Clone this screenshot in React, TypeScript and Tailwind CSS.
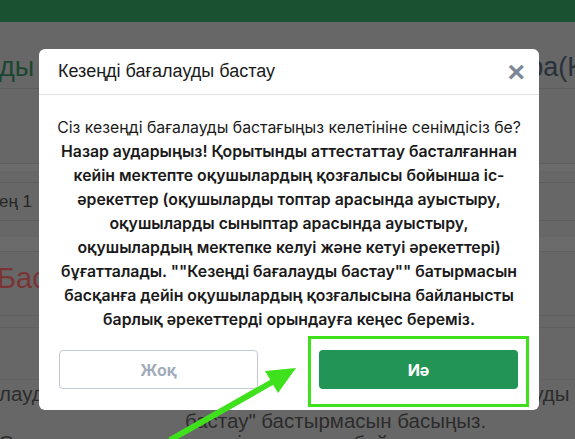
import React from 'react';

const lines: string[] = [
  'Назар аударыңыз! Қорытынды аттестаттау басталғаннан',
  'кейін мектепте оқушылардың қозғалысы бойынша іс-',
  'әрекеттер (оқушыларды топтар арасында ауыстыру,',
  'оқушыларды сыныптар арасында ауыстыру,',
  'оқушылардың мектепке келуі және кетуі әрекеттері)',
  'бұғатталады. ""Кезеңді бағалауды бастау"" батырмасын',
  'басқанға дейін оқушылардың қозғалысына байланысты',
  'барлық әрекеттерді орындауға кеңес береміз.',
];

const App: React.FC = () => {
  return (
    <div className="relative w-[575px] h-[439px] overflow-hidden bg-[#676767] font-['Liberation_Sans',Arial,sans-serif]">
      {/* dimmed page behind the dialog */}
      <div className="h-[22px] bg-[#1a5231]" />
      <div className="flex justify-between pt-[31px] pb-[6px] border-b border-[#5d5d5d] whitespace-nowrap">
        <span className="text-[27px] leading-[29px] text-[#1a4630] -ml-[1px]">ды</span>
        <span className="text-[27px] leading-[29px] text-[#2a303a] -mr-[8px]">ра(Қ</span>
      </div>
      <div className="h-[75px] border-b border-[#5f5f5f]" />
      <div className="h-[7px] bg-[#6b6b6b]" />
      <div className="h-[12px] border-b border-[#5d5d5d]" />
      <div className="h-[38px] flex items-center border-b border-[#5d5d5d]">
        <span className="text-[17px] text-[#262626] -ml-[1px]">ең 1</span>
      </div>
      <div className="h-[16px]" />
      <div className="h-[15px] bg-[#6b6b6b] border-b border-[#5f5f5f]" />
      <div className="h-[52px] flex items-center">
        <span className="text-[29px] leading-[30px] text-[#7a3434] -ml-[3px]">Бас</span>
      </div>
      <div className="h-[12px] border-b border-[#5f5f5f]" />
      <div className="h-[12px] border-b border-[#5f5f5f]" />
      <div className="h-[52px] border-b border-[#626262]" />
      <div className="flex justify-between whitespace-nowrap text-[20.5px] leading-[27px] text-[#2c2c2c]">
        <span className="-ml-[1px]">лауды бастау үшін</span>
        <span className="-mr-[12px]">бағалауды б</span>
      </div>
      <div className="pl-[96px] text-center whitespace-nowrap text-[20.5px] leading-[27px] text-[#2c2c2c]">
        бастау" бастырмасын басыңыз.
      </div>
      <div className="pl-[96px] -mt-[5px] -ml-[200px] -mr-[200px] text-center whitespace-nowrap text-[20.5px] leading-[27px] text-[#2c2c2c]">
        Оқушылардың мектептегі қозғалысы бойынша әрекеттер тоқтатылады
      </div>

      {/* dialog */}
      <div className="absolute left-[39px] top-[49px] w-[500px] rounded-[6px] bg-white font-['Inter',sans-serif]">
        <div className="h-[46px] flex items-center justify-between pl-[19px] pr-[14px] border-b border-[#dee2e6]">
          <h5 className="text-[18px] text-[#1a1a1a] font-['Liberation_Sans',Arial,sans-serif]">
            Кезеңді бағалауды бастау
          </h5>
          <span className="text-[30px] leading-none font-bold text-[#7b8698] font-['Liberation_Sans',Arial,sans-serif]">×</span>
        </div>
        <div className="pt-[21px] px-[8px] text-center text-[15.8px] leading-[24px] text-[#1a1a1a] whitespace-nowrap">
          <p>Сіз кезеңді бағалауды бастағыңыз келетініне сенімдісіз бе?</p>
          {lines.map(l => (
            <p key={l} className="font-semibold">{l}</p>
          ))}
        </div>
        <div className="flex justify-between pt-[18px] pb-[21px] px-[20px]">
          <button className="w-[199px] h-[39px] rounded-[4px] border border-[#c3cad4] bg-white text-[16px] font-bold text-[#a2acba]">
            Жоқ
          </button>
          <button className="w-[199px] h-[39px] rounded-[4px] bg-[#229456] text-[16px] font-bold text-white mr-[1px]">
            Иә
          </button>
        </div>
      </div>

      {/* highlight box */}
      <div className="absolute left-[308px] top-[336px] w-[221px] h-[71px] border-[3px] border-[#3fe01c]" />

      {/* arrow */}
      <svg className="absolute left-0 top-0" width="575" height="439" viewBox="0 0 575 439">
        <line x1="170" y1="440" x2="274" y2="381" stroke="#3fe01c" strokeWidth="6" />
        <polygon points="296,368 265,371 278,393" fill="#3fe01c" />
      </svg>
    </div>
  );
};

export default App;
